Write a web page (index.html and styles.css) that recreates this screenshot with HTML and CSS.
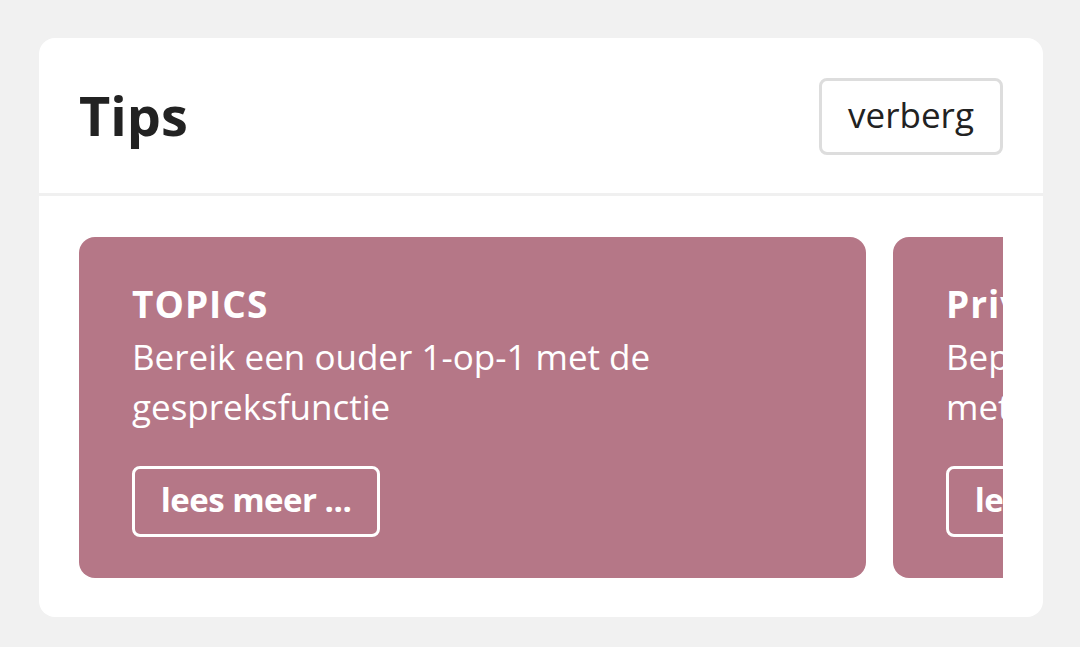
FILE: index.html
```html
<!DOCTYPE html>
<html lang="nl">
<head>
<meta charset="utf-8">
<link rel="stylesheet" href="styles.css">
</head>
<body>
<section class="panel">
  <header class="panel-head">
    <h1 class="panel-title">Tips</h1>
    <button class="hide-btn">verberg</button>
  </header>
  <div class="panel-body">
    <div class="track">
      <article class="tip">
        <h2 class="tip-title">TOPICS</h2>
        <p class="tip-text">Bereik een ouder 1-op-1 met de gespreksfunctie</p>
        <button class="tip-btn">lees meer ...</button>
      </article>
      <article class="tip">
        <h2 class="tip-title">Privacy</h2>
        <p class="tip-text">Bepaal zelf wie jouw gegevens kan zien<br>met de privacy-instellingen</p>
        <button class="tip-btn">lees meer ...</button>
      </article>
    </div>
  </div>
</section>
</body>
</html>
```

FILE: styles.css
```css
* { box-sizing: border-box; }
html, body { margin: 0; padding: 0; }
body {
  background: #f1f1f1;
  font-family: "Open Sans", Lato, sans-serif;
  padding: 38px 37px 30px 39px;
}
.panel {
  width: 1004px;
  height: 579px;
  background: #fff;
  border-radius: 16px;
  overflow: hidden;
}
.panel-head {
  height: 158px;
  border-bottom: 3px solid #f0f0f0;
  display: flex;
  align-items: center;
  justify-content: space-between;
  padding: 0 40px 0 40px;
}
.panel-title {
  margin: 0 0 1px;
  font-size: 54px;
  font-weight: 700;
  color: #222;
  line-height: 1;
}
.hide-btn {
  height: 77px;
  width: 184px;
  background: #fff;
  border: 3px solid #dddddd;
  border-radius: 8px;
  font-family: inherit;
  font-size: 35px;
  color: #222;
  padding: 0 0 4px;
  margin-top: 1px;
}
.panel-body {
  padding: 41px 40px 40px;
}
.track {
  display: flex;
  gap: 27px;
  overflow: hidden;
}
.tip {
  flex: 0 0 787px;
  height: 341px;
  background: #b57787;
  border-radius: 16px;
  color: #fff;
  padding: 45px 53px 40px;
  display: flex;
  flex-direction: column;
  align-items: flex-start;
}
.tip-title {
  margin: 0 0 6px;
  font-size: 37px;
  font-weight: 700;
  line-height: 44px;
  letter-spacing: 1px;
}
.tip-text {
  margin: 0;
  font-size: 35px;
  line-height: 50px;
}
.tip-btn {
  margin-top: 34px;
  height: 71px;
  width: 248px;
  background: transparent;
  border: 3px solid #fff;
  border-radius: 8px;
  color: #fff;
  font-family: inherit;
  font-size: 33px;
  font-weight: 700;
  padding: 0 0 4px;
  letter-spacing: -0.5px;
}
```
